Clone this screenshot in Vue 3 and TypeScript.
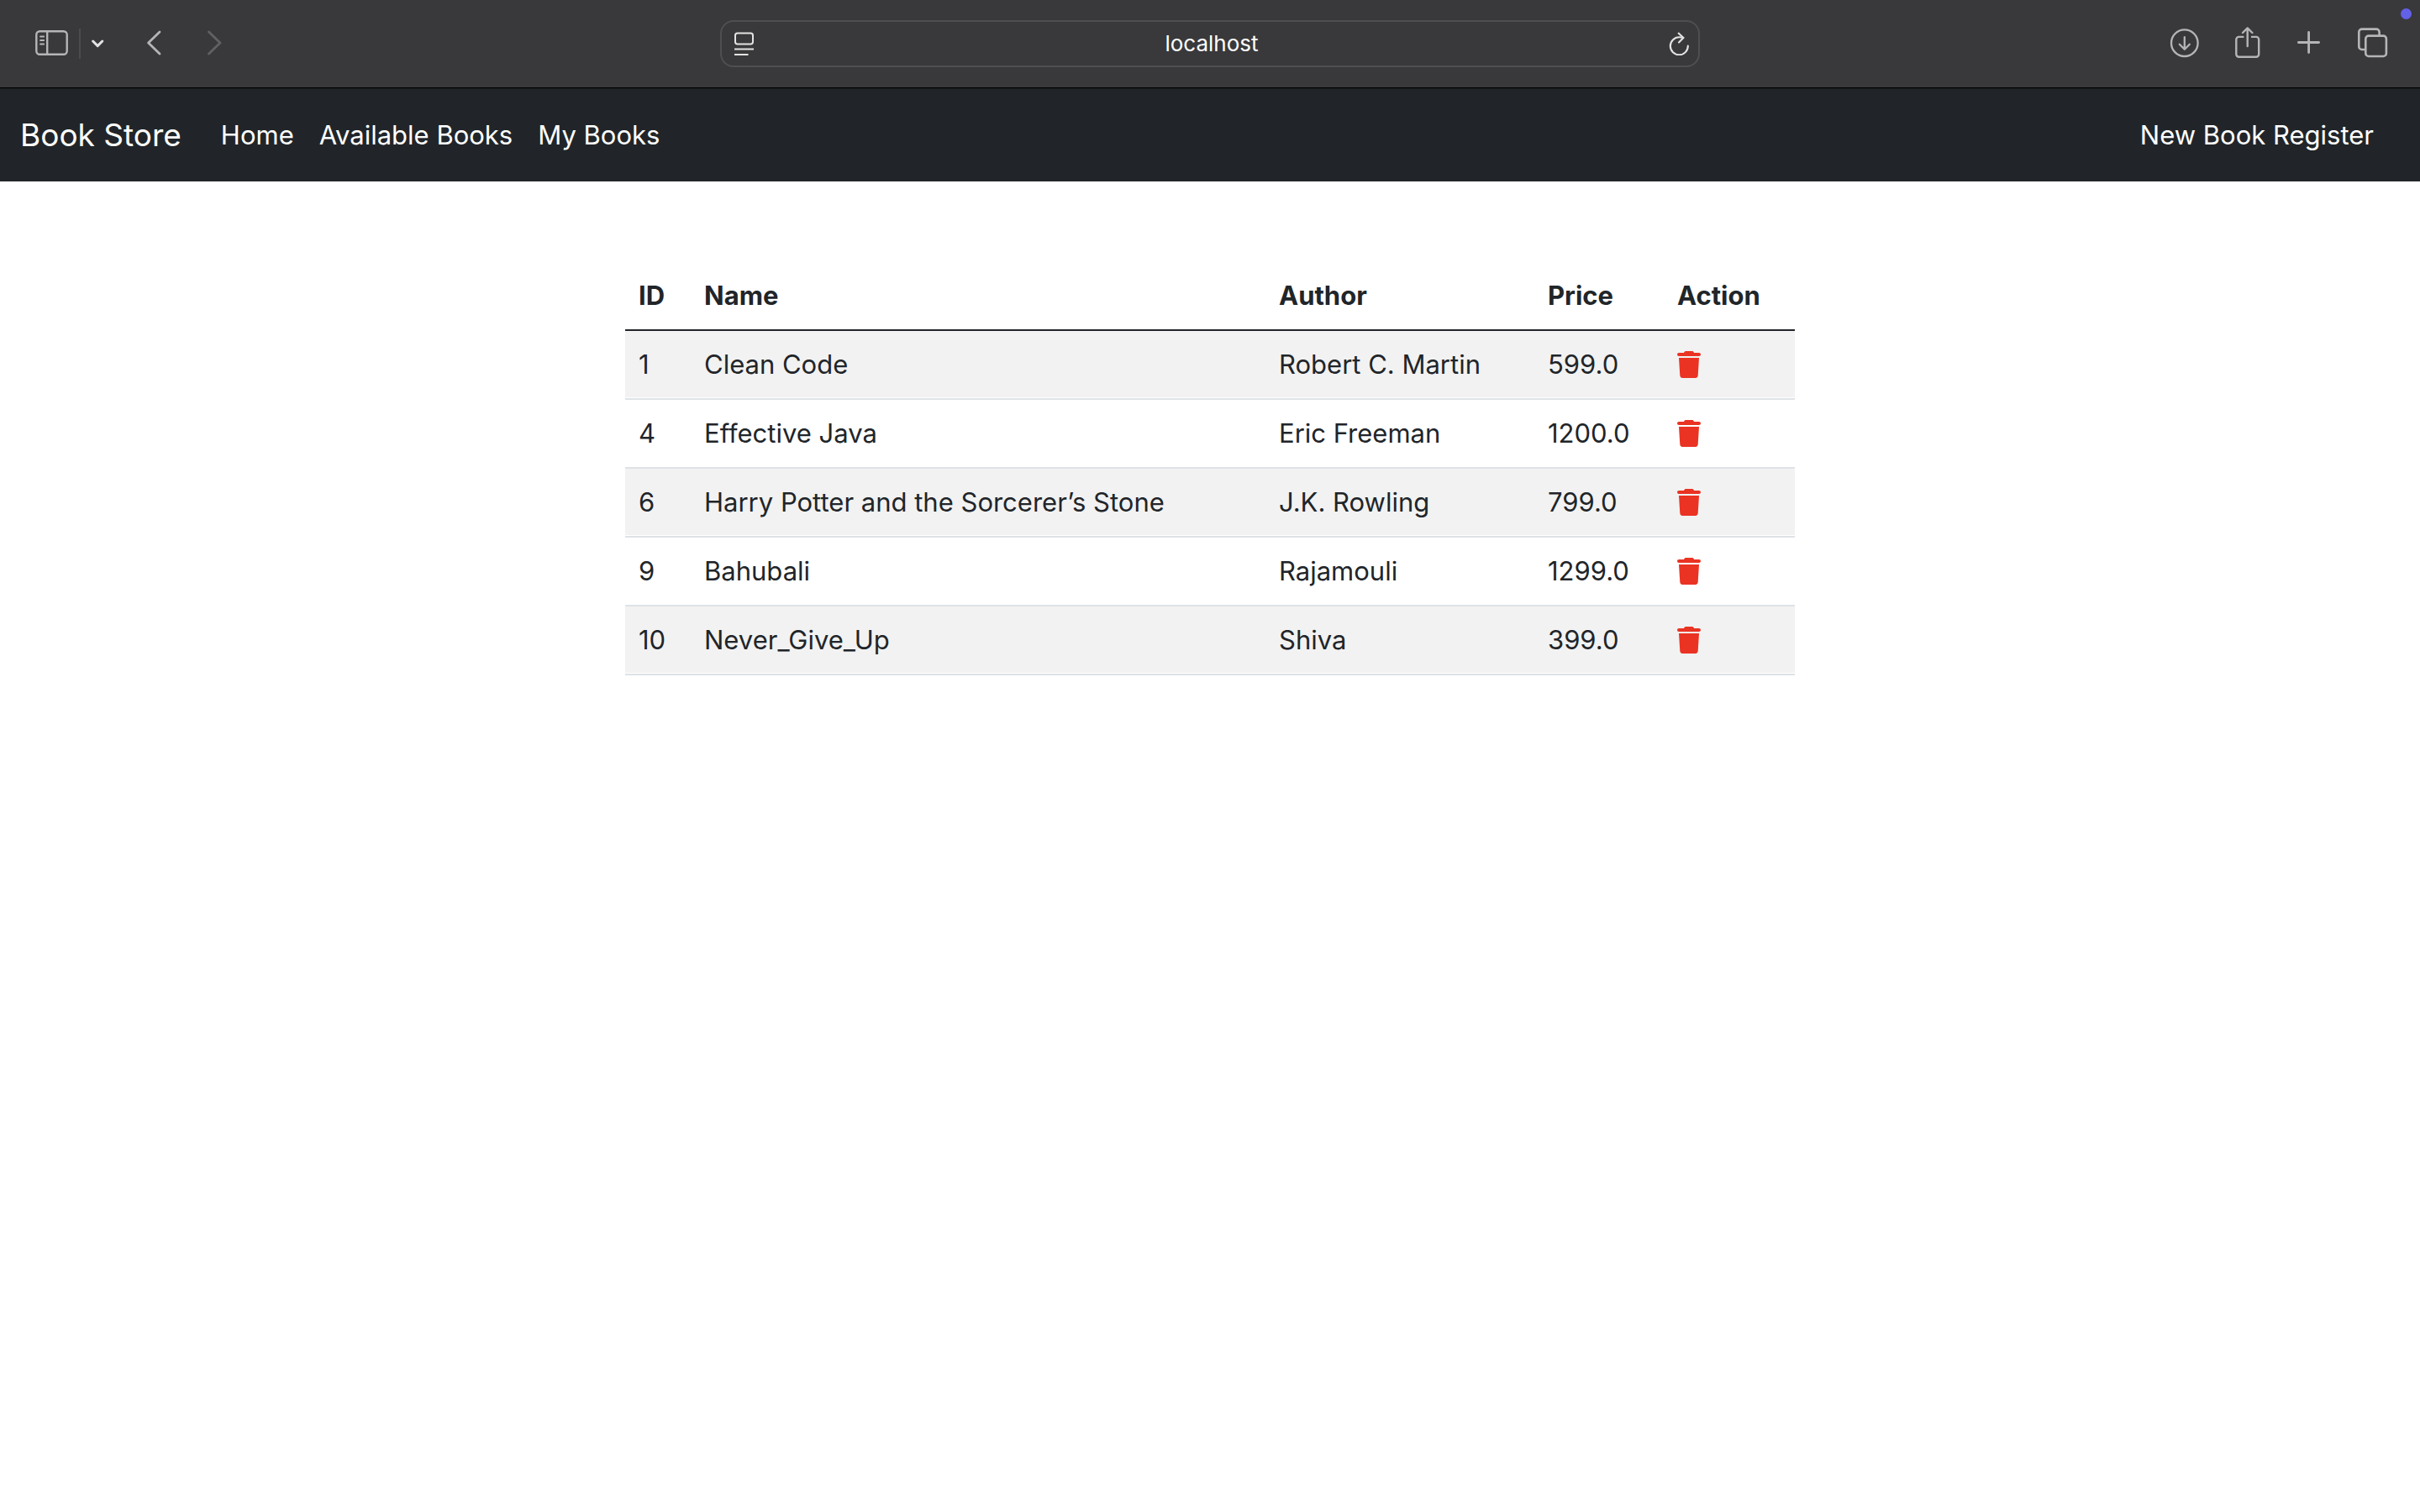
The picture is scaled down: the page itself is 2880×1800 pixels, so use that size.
<script setup lang="ts">
import { ref } from 'vue'

interface Book {
  id: number
  name: string
  author: string
  price: string
}

const address = ref('localhost')

const links: string[] = ['Home', 'Available Books', 'My Books']

const books = ref<Book[]>([
  { id: 1, name: 'Clean Code', author: 'Robert C. Martin', price: '599.0' },
  { id: 4, name: 'Effective Java', author: 'Eric Freeman', price: '1200.0' },
  { id: 6, name: 'Harry Potter and the Sorcerer’s Stone', author: 'J.K. Rowling', price: '799.0' },
  { id: 9, name: 'Bahubali', author: 'Rajamouli', price: '1299.0' },
  { id: 10, name: 'Never_Give_Up', author: 'Shiva', price: '399.0' },
])

function removeBook(id: number): void {
  books.value = books.value.filter((book) => book.id !== id)
}
</script>

<template>
  <div class="window">
    <header class="toolbar">
      <div class="tools tools-left">
        <div class="sidebar-group">
          <button type="button" class="tool" aria-label="Show sidebar">
            <svg width="44" height="40" viewBox="0 0 44 40" fill="none" stroke="currentColor" stroke-width="2.4">
              <rect x="3.3" y="5.2" width="36.4" height="27.6" rx="4" />
              <path d="M16.2 5.2v27.6" />
              <path d="M8 11.5h4.2M8 16h4.2M8 20.5h4.2" stroke-width="1.8" stroke-linecap="round" />
            </svg>
          </button>
          <span class="separator"></span>
          <button type="button" class="tool bright" aria-label="Tab groups">
            <svg width="20" height="40" viewBox="0 0 20 40" fill="none" stroke="currentColor" stroke-width="3" stroke-linecap="round" stroke-linejoin="round">
              <path d="M4.6 17l5.6 5.6 5.6-5.6" />
            </svg>
          </button>
        </div>
        <button type="button" class="tool" aria-label="Back">
          <svg width="24" height="40" viewBox="0 0 24 40" fill="none" stroke="currentColor" stroke-width="2.8" stroke-linecap="round" stroke-linejoin="round">
            <path d="M17 6L3.6 19 17 32" />
          </svg>
        </button>
        <button type="button" class="tool dim" aria-label="Forward">
          <svg width="24" height="40" viewBox="0 0 24 40" fill="none" stroke="currentColor" stroke-width="2.8" stroke-linecap="round" stroke-linejoin="round">
            <path d="M4.6 6L18 19 4.6 32" />
          </svg>
        </button>
      </div>

      <div class="address">
        <button type="button" class="tool bright" aria-label="Page menu">
          <svg width="28" height="28" viewBox="0 0 28 28" fill="none" stroke="currentColor" stroke-width="2">
            <rect x="2" y="1.6" width="21" height="12.8" rx="2.6" />
            <path d="M1 20.4h23M1 27h16.5" />
          </svg>
        </button>
        <input v-model="address" class="address-input" type="text" aria-label="Address" />
        <button type="button" class="tool bright" aria-label="Reload">
          <svg width="28" height="28" viewBox="0 0 28 28" fill="none" stroke="currentColor" stroke-width="2.1" stroke-linecap="round" stroke-linejoin="round">
            <path d="M25.8 16.6A10.5 10.5 0 1 1 15.3 6.3c1.8 0 3.4 .1 5 .6" />
            <path d="M14.6 1.6l5.8 5.4-5.4 5.4" />
          </svg>
        </button>
      </div>

      <div class="tools tools-right">
        <button type="button" class="tool" aria-label="Downloads">
          <svg width="40" height="40" viewBox="0 0 40 40" fill="none" stroke="currentColor" stroke-width="2.3" stroke-linecap="round" stroke-linejoin="round">
            <circle cx="20.8" cy="19.2" r="15.8" />
            <path d="M20.8 12.2V26M14.8 20.8l6 6 6-6" />
          </svg>
        </button>
        <button type="button" class="tool" aria-label="Share">
          <svg width="40" height="40" viewBox="0 0 40 40" fill="none" stroke="currentColor" stroke-width="2.4" stroke-linecap="round" stroke-linejoin="round">
            <path d="M15.4 11.9H10.5a3.2 3.2 0 0 0-3.2 3.2V32.6a3.2 3.2 0 0 0 3.2 3.2H31a3.2 3.2 0 0 0 3.2-3.2V15.1a3.2 3.2 0 0 0-3.2-3.2H26" />
            <path d="M20.7 1.6V23M15 7l5.7-5.6L26.4 7" />
          </svg>
        </button>
        <button type="button" class="tool" aria-label="New tab">
          <svg width="40" height="40" viewBox="0 0 40 40" fill="none" stroke="currentColor" stroke-width="2.8" stroke-linecap="round">
            <path d="M18.6 6.4V30.6M6.4 18.5H30.6" />
          </svg>
        </button>
        <button type="button" class="tool" aria-label="Tab overview">
          <svg width="40" height="40" viewBox="0 0 40 40" fill="none" stroke="currentColor" stroke-width="2.6">
            <rect x="11.3" y="10.6" width="24.6" height="24.4" rx="3.6" />
            <path d="M27.6 10.6V6.2a3.6 3.6 0 0 0-3.6-3.6H6.9a3.6 3.6 0 0 0-3.6 3.6V23.4A3.6 3.6 0 0 0 6.9 27h4.4" />
          </svg>
        </button>
      </div>
      <span class="indicator"></span>
    </header>

    <nav class="navbar">
      <a class="brand" href="#">Book Store</a>
      <ul class="nav-list">
        <li v-for="link in links" :key="link">
          <a class="nav-link" href="#">{{ link }}</a>
        </li>
      </ul>
      <a class="nav-link register" href="#">New Book Register</a>
    </nav>

    <main class="content">
      <table class="books">
        <colgroup>
          <col class="col-id" />
          <col />
          <col class="col-author" />
          <col class="col-price" />
          <col class="col-action" />
        </colgroup>
        <thead>
          <tr>
            <th scope="col">ID</th>
            <th scope="col">Name</th>
            <th scope="col">Author</th>
            <th scope="col">Price</th>
            <th scope="col">Action</th>
          </tr>
        </thead>
        <tbody>
          <tr v-for="book in books" :key="book.id">
            <td>{{ book.id }}</td>
            <td>{{ book.name }}</td>
            <td>{{ book.author }}</td>
            <td>{{ book.price }}</td>
            <td>
              <button type="button" class="delete" :aria-label="`Delete ${book.name}`" @click="removeBook(book.id)">
                <svg width="28" height="32" viewBox="0 0 448 512" fill="currentColor">
                  <path d="M135.2 17.7L128 32H32C14.3 32 0 46.3 0 64s14.3 32 32 32h384c17.7 0 32-14.3 32-32s-14.3-32-32-32h-96l-7.2-14.3C307.4 6.8 296.3 0 284.2 0H163.8c-12.1 0-23.2 6.8-28.6 17.7zM416 128H32l21.2 339c1.6 25.3 22.6 45 47.9 45h245.8c25.3 0 46.3-19.7 47.9-45L416 128z" />
                </svg>
              </button>
            </td>
          </tr>
        </tbody>
      </table>
    </main>
  </div>
</template>

<style>
body {
  margin: 0;
  background: #ffffff;
}
</style>

<style scoped>
.window {
  font-family: Inter, "Liberation Sans", sans-serif;
  font-size: 31px;
  line-height: 48px;
  color: #212529;
}

.toolbar {
  position: relative;
  display: grid;
  grid-template-columns: 1fr minmax(0, 1166px) 1fr;
  align-items: center;
  height: 104px;
  background: #39393b;
}

.tools,
.sidebar-group {
  display: flex;
  align-items: center;
}

.tools-left {
  gap: 47px;
  padding-left: 40px;
}

.sidebar-group {
  gap: 10px;
}

.tools-right {
  justify-content: flex-end;
  gap: 35px;
  padding-right: 36px;
}

.separator {
  width: 2px;
  height: 36px;
  background: #4c4c4e;
}

.tool,
.delete {
  display: block;
  padding: 0;
  border: 0;
  background: none;
  color: #b5b5b7;
  cursor: pointer;
}

.tool svg,
.delete svg {
  display: block;
}

.tool.bright {
  color: #e3e3e4;
}

.tool.dim {
  color: #616163;
}

.address {
  display: flex;
  align-items: center;
  box-sizing: border-box;
  height: 56px;
  padding: 0 10px 0 14px;
  border: 2px solid #4f4f51;
  border-radius: 16px;
}

.address-input {
  flex: 1;
  min-width: 0;
  padding: 0;
  border: 0;
  outline: 0;
  background: none;
  color: #ffffff;
  font-family: inherit;
  font-size: 26px;
  line-height: 32px;
  text-align: center;
}

.indicator {
  position: absolute;
  top: 10px;
  right: 10px;
  width: 13px;
  height: 13px;
  border-radius: 50%;
  background: #6361e8;
}

.navbar {
  display: flex;
  align-items: center;
  box-sizing: border-box;
  min-height: 112px;
  padding: 0 40px 0 24px;
  border-top: 1px solid #000000;
  background: #212529;
  box-shadow: inset 0 1px #1a1c1e;
}

.brand {
  margin-right: 32px;
  color: #ffffff;
  font-size: 37px;
  line-height: 60px;
  text-decoration: none;
}

.nav-list {
  display: flex;
  margin: 0;
  padding: 0;
  list-style: none;
}

.nav-link {
  display: block;
  padding: 16px 15px;
  color: #ffffff;
  text-decoration: none;
}

.register {
  margin-left: auto;
}

.content {
  box-sizing: border-box;
  width: 50%;
  margin: 0 auto;
  padding: 96px 24px;
}

.books {
  width: 100%;
  table-layout: fixed;
  border-spacing: 0;
}

.col-id {
  width: 78px;
}

.col-author {
  width: 320px;
}

.col-price {
  width: 154px;
}

.col-action {
  width: 156px;
}

.books th,
.books td {
  padding: 16px;
  border-bottom: 2px solid #dee2e6;
  text-align: left;
  white-space: nowrap;
}

.books th {
  border-bottom-color: #212529;
  font-weight: 700;
}

.books tbody tr:nth-child(odd) td {
  background: linear-gradient(#f2f2f2, #f2f2f2) no-repeat 0 0 / 100% calc(100% - 1px);
}

.delete {
  color: #ea3323;
}
</style>
